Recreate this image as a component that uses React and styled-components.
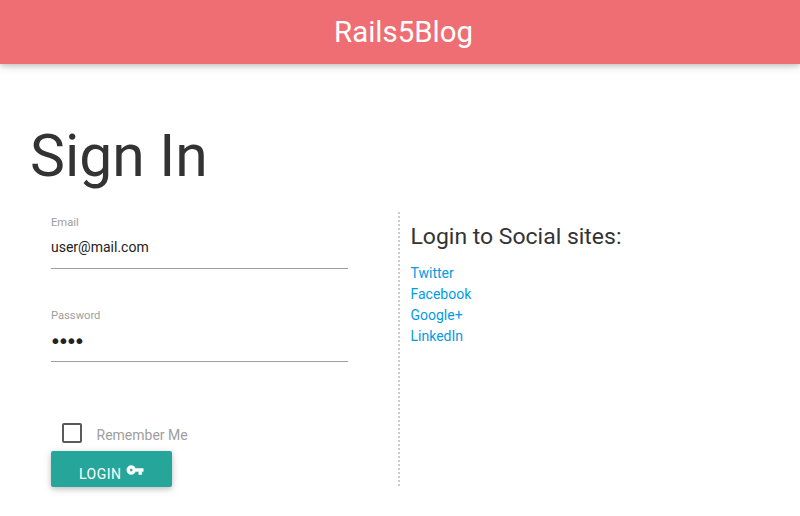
import React from "react";
import styled, { createGlobalStyle } from "styled-components";

const GlobalStyle = createGlobalStyle`
  * { box-sizing: border-box; }
  body { margin: 0; background: #fff; color: #333; font-family: Roboto, sans-serif; font-size: 14px; line-height: 21px; }
`;
const Layout = styled.div`
  min-height: 100vh;
`;
const Navbar = styled.header`
  height: 64px;
  display: flex;
  justify-content: center;
  background: #ee6e73;
  padding-left: 7px;
  box-shadow: 0 2px 5px rgba(0,0,0,0.16), 0 2px 10px rgba(0,0,0,0.12);
`;
const Brand = styled.a`
  color: #fff;
  font-size: 29.4px;
  line-height: 64px;
`;
const Page = styled.main`
  padding: 59px 30px 0;
`;
const Title = styled.h1`
  margin: 0;
  font-size: 58.8px;
  line-height: 65px;
  font-weight: 400;
`;
const Columns = styled.div`
  display: flex;
  margin-top: 24px;
`;
const Form = styled.form`
  width: 368px;
  height: 274px;
  padding: 0 50px 0 21px;
`;
const Field = styled.div`
  height: 93px;
`;
const Label = styled.label`
  display: block;
  padding-top: 3px;
  font-size: 11.2px;
  line-height: 16px;
  color: #9e9e9e;
`;
const Input = styled.input`
  display: block;
  width: 297px;
  height: 38px;
  margin: 0;
  padding: 0 0 5px;
  border: 0;
  border-bottom: 1px solid #9e9e9e;
  outline: none;
  background: transparent;
  color: #222;
  font: 14px Roboto, sans-serif;
`;
const PasswordInput = styled(Input)`
  padding-bottom: 3px;
  font: 20px "DejaVu Sans", sans-serif;
  letter-spacing: -3.8px;
  text-indent: -1.5px;
`;
const Remember = styled.label`
  display: flex;
  align-items: center;
  height: 25px;
  margin: 25px 0 3px 11px;
  color: #9e9e9e;
`;
const Box = styled.span`
  width: 20px;
  height: 20px;
  margin: -6px 14.5px 0 0;
  border: 2px solid #5a5a5a;
  border-radius: 2px;
`;
const LoginButton = styled.button`
  display: flex;
  width: 121px;
  height: 36px;
  padding: 5px 0 0 28px;
  border: 0;
  border-radius: 2px;
  background: #26a69a;
  color: #fff;
  font: 14px/36px Roboto, sans-serif;
  letter-spacing: 0.5px;
  box-shadow: 0 2px 5px rgba(0,0,0,0.16), 0 2px 10px rgba(0,0,0,0.12);
`;
const KeyIcon = styled.svg`
  width: 18px;
  height: 18px;
  margin: 5px 0 0 4px;
  fill: currentColor;
  stroke: currentColor;
  stroke-width: 0.6;
`;
const Divider = styled.div`
  width: 2px;
  background: repeating-linear-gradient(to bottom, #ccc 0 2px, transparent 2px 4px);
`;
const Social = styled.section`
  padding: 10px 0 0 10.5px;
`;
const Heading = styled.h2`
  margin: 0 0 12px;
  font-size: 22.96px;
  line-height: 29px;
  font-weight: 400;
`;
const SocialLink = styled.a`
  display: block;
  color: #039be5;
`;

export default function App() {
  return (
    <Layout>
      <GlobalStyle />
      <Navbar><Brand>Rails5Blog</Brand></Navbar>
      <Page>
        <Title>Sign In</Title>
        <Columns>
          <Form>
            <Field>
              <Label htmlFor="email">Email</Label>
              <Input id="email" type="text" defaultValue="user@mail.com" />
            </Field>
            <Field>
              <Label htmlFor="password">Password</Label>
              <PasswordInput id="password" type="password" defaultValue="user" />
            </Field>
            <Remember><Box />Remember Me</Remember>
            <LoginButton type="button">
              LOGIN
              <KeyIcon viewBox="0 0 24 24">
                <path d="M12.65 10C11.83 7.67 9.61 6 7 6c-3.31 0-6 2.69-6 6s2.69 6 6 6c2.61 0 4.83-1.67 5.65-4H17v4h4v-4h2v-4H12.65zM7 14c-1.1 0-2-.9-2-2s.9-2 2-2 2 .9 2 2-.9 2-2 2z" />
              </KeyIcon>
            </LoginButton>
          </Form>
          <Divider />
          <Social>
            <Heading>Login to Social sites:</Heading>
            {["Twitter", "Facebook", "Google+", "LinkedIn"].map((s) => (
              <SocialLink key={s}>{s}</SocialLink>
            ))}
          </Social>
        </Columns>
      </Page>
    </Layout>
  );
}
